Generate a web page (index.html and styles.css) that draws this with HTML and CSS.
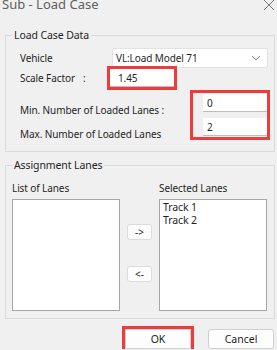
FILE: index.html
```html
<!DOCTYPE html>
<html lang="en">
<head>
    <meta charset="UTF-8">
    <title>Sub - Load Case</title>
    <link rel="stylesheet" href="styles.css">
</head>
<body>
    <div class="titlebar">
        <span class="title">Sub - Load Case</span>
        <svg class="close" width="12" height="12" viewBox="0 0 12 12">
            <path d="M1 1 L11 11 M11 1 L1 11" stroke="#777" stroke-width="1" fill="none"/>
        </svg>
    </div>

    <fieldset class="group group-data">
        <legend>Load Case Data</legend>

        <div class="row row-vehicle">
            <span class="label">Vehicle</span>
            <div class="select">
                <span>VL:Load Model 71</span>
                <svg width="10" height="6" viewBox="0 0 10 6">
                    <path d="M1 1 L5 5 L9 1" stroke="#888" stroke-width="1" fill="none"/>
                </svg>
            </div>
        </div>

        <div class="row row-scale">
            <span class="label label-scale">Scale Factor<span class="colon">:</span></span>
            <div class="input input-scale mark">1.45</div>
        </div>

        <div class="row row-lanes">
            <div class="lane-labels">
                <span class="label">Min. Number of Loaded Lanes :</span>
                <span class="label">Max. Number of Loaded Lanes</span>
            </div>
            <div class="lane-inputs mark-box">
                <div class="input input-min">0</div>
                <div class="input input-max">2</div>
            </div>
        </div>
    </fieldset>

    <fieldset class="group group-assign">
        <legend>Assignment Lanes</legend>
        <div class="lanes">
            <div class="lane-col">
                <span class="label">List of Lanes</span>
                <div class="listbox"></div>
            </div>
            <div class="move-buttons">
                <button class="btn-small">-&gt;</button>
                <button class="btn-small">&lt;-</button>
            </div>
            <div class="lane-col">
                <span class="label">Selected Lanes</span>
                <div class="listbox">
                    <div>Track 1</div>
                    <div>Track 2</div>
                </div>
            </div>
        </div>
    </fieldset>

    <div class="footer">
        <button class="btn btn-ok mark">OK</button>
        <button class="btn">Cancel</button>
    </div>
</body>
</html>
```

FILE: styles.css
```css
body {
    margin: 0;
    background-color: #f0f0f0;
    font-family: 'Noto Sans', sans-serif;
    font-size: 10px;
    letter-spacing: -0.1px;
    color: #1f1f1f;
    overflow: hidden;
}
.titlebar {
    height: 14px;
    display: flex;
    justify-content: space-between;
    align-items: center;
    padding: 0 2px 0 2px;
    overflow: hidden;
}
.title {
    font-size: 13px;
    letter-spacing: 0;
    line-height: 12px;
    color: #5f5f5f;
    margin-top: -6px;
}
.close {
    margin-top: -4px;
}
.group {
    margin: 15px 2px 0 5px;
    padding: 0;
    border: 1px solid #dadada;
    min-width: 0;
}
.group legend {
    margin-left: 6px;
    padding: 0 2px;
    line-height: 12px;
    font-size: 10.5px;
    color: #1f1f1f;
}
.group-data {
    height: 123px;
    box-sizing: border-box;
}
.row {
    display: flex;
    align-items: center;
}
.label {
    line-height: 14px;
    white-space: nowrap;
}
.row-vehicle {
    margin-top: 7px;
    padding-left: 14px;
}
.row-vehicle .label {
    width: 92px;
}
.select {
    width: 156px;
    height: 20px;
    box-sizing: border-box;
    background: #fff;
    border: 1px solid #e3e3e3;
    border-radius: 2px;
    display: flex;
    align-items: center;
    justify-content: space-between;
    padding: 0 6px 0 3px;
}
.row-scale {
    margin-top: 1px;
    padding-left: 14px;
}
.label-scale {
    width: 90px;
}
.colon {
    margin-left: 8px;
}
.input {
    background: #fff;
    height: 18px;
    box-sizing: border-box;
    line-height: 18px;
    padding-left: 4px;
    border-bottom: 1px solid #bdbdbd;
}
.input-scale {
    width: 64px;
    padding-left: 8px;
}
.mark {
    outline: 3px solid #ee3b3b;
}
.row-lanes {
    margin-top: 3px;
    padding-left: 14px;
    align-items: flex-start;
}
.lane-labels {
    width: 170px;
    display: flex;
    flex-direction: column;
    padding-top: 13px;
    gap: 10px;
}
.mark-box {
    border: 3px solid #ee3b3b;
    width: 80px;
    height: 50px;
    box-sizing: border-box;
    padding: 1px 0 0 10px;
    display: flex;
    flex-direction: column;
    gap: 6px;
}
.group-assign {
    margin-top: 7px;
    height: 160px;
    box-sizing: border-box;
}
.lanes {
    display: flex;
    padding: 10px 0 0 6px;
}
.lane-col {
    display: flex;
    flex-direction: column;
    gap: 4px;
}
.listbox {
    width: 108px;
    height: 112px;
    box-sizing: border-box;
    background: #fff;
    border: 1px solid #a6a6a6;
    padding: 1px 3px;
    line-height: 13px;
    font-size: 10.5px;
}
.move-buttons {
    width: 39px;
    display: flex;
    flex-direction: column;
    align-items: center;
    padding-top: 43px;
    gap: 26px;
}
.btn-small {
    width: 25px;
    height: 16px;
    padding: 0;
    font: inherit;
    font-size: 10px;
    line-height: 14px;
    background: #fdfdfd;
    border: 1px solid #dcdcdc;
    border-radius: 3px;
    color: #1f1f1f;
}
.footer {
    display: flex;
    justify-content: flex-end;
    gap: 17px;
    margin-top: 10px;
    padding-right: 3px;
}
.btn {
    width: 66px;
    height: 20px;
    padding: 0;
    font: inherit;
    font-size: 10.5px;
    background: #fdfdfd;
    border: 1px solid #d0d0d0;
    border-radius: 3px;
    color: #1f1f1f;
}
.btn-ok {
    border-radius: 0;
}
```
